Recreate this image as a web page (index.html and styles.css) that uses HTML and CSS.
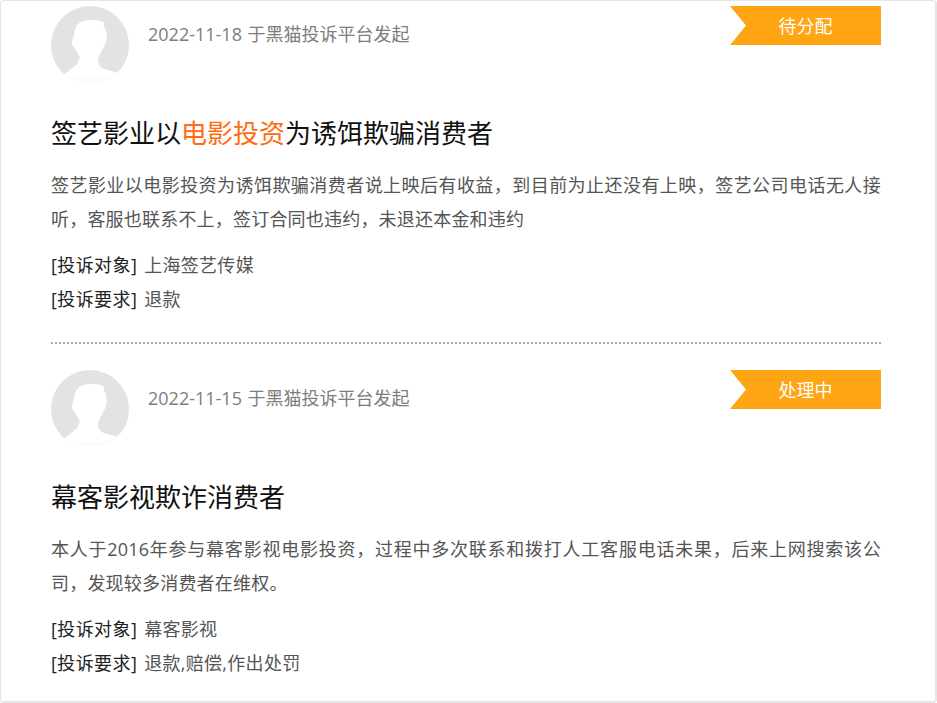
FILE: index.html
```html
<!DOCTYPE html>
<html lang="zh-CN">
<head>
  <meta charset="UTF-8" />
  <title>投诉列表</title>
  <link rel="stylesheet" href="styles.css">
</head>
<body>
<div class="container">
  <div class="item">
    <div class="item-head">
      <svg class="avatar" viewBox="0 0 78 78">
        <circle cx="39" cy="39" r="39" fill="#e3e3e3"/>
        <path fill="#fff" d="M23.3 26.7C24 20 28 16 33 15C38 13.500 48 13.500 53.300 16.700L52.700 20.700C54 22 55 23 55 25C55.700 28 55.700 31 55.700 33.300C55 36 54.500 38 53.300 40C51.500 44 49 47 48.300 50C47 53 46.500 55 47.300 56.700C48.500 60 50 62 53 63L68 67.300L78 78H0L13.300 68.300L24 60C26 58.500 27.500 57 27.300 55C28 53 29.500 52 28.300 50C27 47 25 44.500 23.300 41.700C22 40 20.500 38.500 20.700 36.700C21 34 23 30 23.300 26.700Z"/>
        <path fill="#fcfcfc" d="M13.300 68.300C30 80 50 80 68 67.300C50 74 30 74 13.300 68.300Z"/>
      </svg>
      <div class="date">2022-11-18 于黑猫投诉平台发起</div>
      <div class="status">待分配</div>
    </div>
    <h2 class="title">签艺影业以<span class="hl">电影投资</span>为诱饵欺骗消费者</h2>
    <p class="desc">签艺影业以电影投资为诱饵欺骗消费者说上映后有收益，到目前为止还没有上映，签艺公司电话无人接听，客服也联系不上，签订合同也违约，未退还本金和违约</p>
    <p class="meta"><b>[投诉对象]</b> 上海签艺传媒</p>
    <p class="meta"><b>[投诉要求]</b> 退款</p>
  </div>
  <div class="item">
    <div class="item-head">
      <svg class="avatar" viewBox="0 0 78 78">
        <circle cx="39" cy="39" r="39" fill="#e3e3e3"/>
        <path fill="#fff" d="M23.3 26.7C24 20 28 16 33 15C38 13.500 48 13.500 53.300 16.700L52.700 20.700C54 22 55 23 55 25C55.700 28 55.700 31 55.700 33.300C55 36 54.500 38 53.300 40C51.500 44 49 47 48.300 50C47 53 46.500 55 47.300 56.700C48.500 60 50 62 53 63L68 67.300L78 78H0L13.300 68.300L24 60C26 58.500 27.500 57 27.300 55C28 53 29.500 52 28.300 50C27 47 25 44.500 23.300 41.700C22 40 20.500 38.500 20.700 36.700C21 34 23 30 23.300 26.700Z"/>
        <path fill="#fcfcfc" d="M13.300 68.300C30 80 50 80 68 67.300C50 74 30 74 13.300 68.300Z"/>
      </svg>
      <div class="date">2022-11-15 于黑猫投诉平台发起</div>
      <div class="status">处理中</div>
    </div>
    <h2 class="title">幕客影视欺诈消费者</h2>
    <p class="desc">本人于2016年参与幕客影视电影投资，过程中多次联系和拨打人工客服电话未果，后来上网搜索该公司，发现较多消费者在维权。</p>
    <p class="meta"><b>[投诉对象]</b> 幕客影视</p>
    <p class="meta"><b>[投诉要求]</b> 退款,赔偿,作出处罚</p>
  </div>
</div>
</body>
</html>
```

FILE: styles.css
```css
* {
  margin: 0;
  padding: 0;
  box-sizing: border-box;
}
html, body {
  height: 100%;
  overflow: hidden;
}
body {
  background: #fff;
  color: #555;
  font-family: "Open Sans", "Noto Sans CJK SC", sans-serif;
  font-size: 18px;
}
.container {
  height: 703px;
  padding: 5px 54px 0 50px;
  background: #fff;
  border: 1px solid #e6e6e6;
  border-width: 1px 2px 2px 1px;
  border-radius: 4px;
}
.item {
  padding-bottom: 26px;
  margin-bottom: 26px;
  border-bottom: 2px dotted #aaa;
}
.item:last-child {
  border-bottom: none;
  margin-bottom: 0;
}
.item-head {
  display: flex;
  align-items: flex-start;
}
.avatar {
  width: 78px;
  height: 78px;
  flex-shrink: 0;
}
.date {
  margin-left: 19px;
  margin-top: 14px;
  line-height: 28px;
  word-spacing: 1px;
  color: #7d7d7d;
}
.status {
  width: 151px;
  height: 39px;
  margin-left: auto;
  line-height: 41px;
  text-align: center;
  color: #fff;
  background: #ffa413;
  clip-path: polygon(0 0, 100% 0, 100% 100%, 0 100%, 16px 50%);
}
.title {
  margin-top: 29px;
  margin-bottom: 15px;
  font-size: 26px;
  font-weight: 400;
  line-height: 40px;
  color: #111;
}
.hl {
  color: #ff6a13;
}
.desc {
  line-height: 34px;
  margin-bottom: 12px;
  letter-spacing: 0.2px;
  text-align: justify;
}
.meta {
  line-height: 34px;
  letter-spacing: 0.3px;
  word-spacing: 2px;
}
.meta b {
  font-weight: 400;
  letter-spacing: 0.4px;
  color: #222;
}
```
